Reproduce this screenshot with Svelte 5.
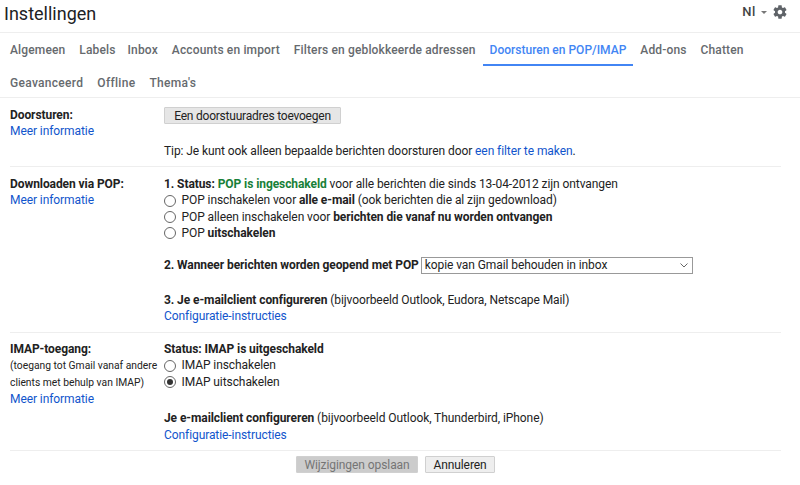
<script>
  const tabsOne = ['Algemeen', 'Labels', 'Inbox', 'Accounts en import', 'Filters en geblokkeerde adressen', 'Doorsturen en POP/IMAP', 'Add-ons', 'Chatten'];
  const tabsTwo = ['Geavanceerd', 'Offline', "Thema's"];
  const active = 'Doorsturen en POP/IMAP';
</script>

<div class="page">
  <header class="head">
    <h1>Instellingen</h1>
    <div class="tools">
      <span class="lang">Nl</span>
      <span class="caret"></span>
      <svg class="gear" viewBox="0 0 24 24" width="16" height="16"><path fill="#5f6368" d="M19.43 12.98c.04-.32.07-.64.07-.98s-.03-.66-.07-.98l2.11-1.65c.19-.15.24-.42.12-.64l-2-3.46c-.12-.22-.39-.3-.61-.22l-2.49 1c-.52-.4-1.08-.73-1.69-.98l-.38-2.65C14.46 2.18 14.25 2 14 2h-4c-.25 0-.46.18-.49.42l-.38 2.65c-.61.25-1.17.59-1.69.98l-2.49-1c-.23-.09-.49 0-.61.22l-2 3.46c-.13.22-.07.49.12.64l2.11 1.65c-.04.32-.07.65-.07.98s.03.66.07.98l-2.11 1.65c-.19.15-.24.42-.12.64l2 3.46c.12.22.39.3.61.22l2.49-1c.52.4 1.08.73 1.69.98l.38 2.65c.03.24.24.42.49.42h4c.25 0 .46-.18.49-.42l.38-2.65c.61-.25 1.17-.59 1.69-.98l2.49 1c.23.09.49 0 .61-.22l2-3.46c.12-.22.07-.49-.12-.64l-2.11-1.65zM12 15.5c-1.93 0-3.5-1.57-3.5-3.5s1.57-3.5 3.5-3.5 3.5 1.57 3.5 3.5-1.57 3.5-3.5 3.5z"/></svg>
    </div>
  </header>

  <nav class="tabs">
    <div class="tabrow one">
      {#each tabsOne as t}
        <span class="tab" class:on={t === active}>{t}</span>
      {/each}
    </div>
    <div class="tabrow two">
      {#each tabsTwo as t}
        <span class="tab">{t}</span>
      {/each}
    </div>
  </nav>

  <main class="content">
    <section class="row first">
      <div class="side">
        <div class="label">Doorsturen:</div>
        <a class="link" href="#a">Meer informatie</a>
      </div>
      <div class="body">
        <button class="btn add">Een doorstuuradres toevoegen</button>
        <div class="tip">Tip: Je kunt ook alleen bepaalde berichten doorsturen door <a class="link" href="#a">een filter te maken</a>.</div>
      </div>
    </section>

    <section class="row pop">
      <div class="side">
        <div class="label">Downloaden via POP:</div>
        <a class="link" href="#a">Meer informatie</a>
      </div>
      <div class="body">
        <div class="line"><b>1. Status: <span class="green">POP is ingeschakeld</span></b> voor alle berichten die sinds 13-04-2012 zijn ontvangen</div>
        <div class="line opt"><span class="radio"></span><span>POP inschakelen voor <b>alle e-mail</b> (ook berichten die al zijn gedownload)</span></div>
        <div class="line opt"><span class="radio"></span><span>POP alleen inschakelen voor <b>berichten die vanaf nu worden ontvangen</b></span></div>
        <div class="line opt"><span class="radio"></span><span>POP <b>uitschakelen</b></span></div>
        <div class="line when"><b>2. Wanneer berichten worden geopend met POP</b>
          <span class="select">kopie van Gmail behouden in inbox
            <svg class="chev" viewBox="0 0 8 5" width="8" height="5"><path d="M.5.5l3.5 3.5 3.5-3.5" fill="none" stroke="#666" stroke-width="1"/></svg>
          </span>
        </div>
        <div class="line conf"><b>3. Je e-mailclient configureren</b> (bijvoorbeeld Outlook, Eudora, Netscape Mail)</div>
        <a class="line link" href="#a">Configuratie-instructies</a>
      </div>
    </section>

    <section class="row imap">
      <div class="side">
        <div class="label">IMAP-toegang:</div>
        <div class="note">(toegang tot Gmail vanaf andere<br />clients met behulp van IMAP)</div>
        <a class="link" href="#a">Meer informatie</a>
      </div>
      <div class="body">
        <div class="line"><b>Status: IMAP is uitgeschakeld</b></div>
        <div class="line opt"><span class="radio"></span><span>IMAP inschakelen</span></div>
        <div class="line opt"><span class="radio sel"></span><span>IMAP uitschakelen</span></div>
        <div class="line conf2"><b>Je e-mailclient configureren</b> (bijvoorbeeld Outlook, Thunderbird, iPhone)</div>
        <a class="line link" href="#a">Configuratie-instructies</a>
      </div>
    </section>

    <div class="actions">
      <button class="btn save">Wijzigingen opslaan</button>
      <button class="btn cancel">Annuleren</button>
    </div>
  </main>
</div>

<style>
  :global(body) { margin: 0; background: #fff; }
  .page {
    width: 800px;
    height: 485px;
    overflow: hidden;
    font-family: Roboto, "Liberation Sans", sans-serif;
    font-size: 12px;
    line-height: 16.4px;
    letter-spacing: -0.08px;
    color: #222;
  }
  .head {
    height: 33px;
    box-sizing: border-box;
    border-bottom: 1px solid #eee;
    display: flex;
    align-items: flex-start;
    justify-content: space-between;
    padding: 0 12px 0 4px;
  }
  h1 {
    margin: 0;
    font-size: 18px;
    font-weight: 400;
    line-height: 28px;
    color: #202124;
    letter-spacing: 0;
  }
  .tools { display: flex; align-items: center; height: 24px; }
  .lang { font-size: 13px; font-weight: 500; color: #444; letter-spacing: 0.6px; }
  .caret {
    width: 0; height: 0; margin: 0 5px 0 5px;
    border-left: 3px solid transparent; border-right: 3px solid transparent;
    border-top: 3px solid #777;
  }
  .tabs { height: 65px; box-sizing: border-box; border-bottom: 1px solid #eee; padding-left: 3px; }
  .tabrow { height: 32px; display: flex; white-space: nowrap; }
  .tabrow.one { height: 33px; letter-spacing: 0.14px; }
  .tabrow.two { letter-spacing: 0.3px; }
  .tab {
    padding: 1px 7px 0;
    height: 33px;
    line-height: 32px;
    font-size: 12px;
    font-weight: 500;
    color: #666a6e;
    box-sizing: border-box;
  }
  .tabrow.one .tab:nth-child(2) { padding-right: 5px; }
  .tab.on { color: #4285f4; border-bottom: 2px solid #4285f4; letter-spacing: 0; }
  .content { padding: 0 19px 0 10px; }
  .row {
    display: grid;
    grid-template-columns: 154px 1fr;
    border-bottom: 1px solid #eee;
    box-sizing: border-box;
    padding-top: 9px;
  }
  .first { height: 69px; }
  .pop { height: 166px; }
  .imap { height: 118px; padding-top: 8px; }
  .label { font-weight: 700; }
  .link { color: #15c; text-decoration: none; display: block; }
  .tip .link { display: inline; }
  .note { font-size: 10.3px; line-height: 16.6px; margin-top: 0.6px; letter-spacing: 0; white-space: nowrap; }
  .btn {
    font-family: inherit;
    font-size: 12px;
    letter-spacing: inherit;
    line-height: 14px;
    height: 17px;
    padding: 0;
    margin: 0;
    border: 1px solid #d0d0d0;
    border-radius: 1px;
    background: #e6e6e6;
    color: #222;
    display: block;
    white-space: nowrap;
    box-sizing: border-box;
  }
  .tip { margin-top: 19px; }
  .add { width: 177px; letter-spacing: -0.22px; }
  .line { min-height: 16.4px; }
  .opt { display: flex; align-items: center; }
  .radio {
    width: 12px; height: 12px;
    box-sizing: border-box;
    border: 1px solid #666;
    border-radius: 50%;
    margin-right: 5.5px;
    flex: none;
    display: flex;
    align-items: center;
    justify-content: center;
  }
  .radio.sel::after { content: ""; width: 6px; height: 6px; border-radius: 50%; background: #333; }
  .green { color: #188038; }
  .when { margin-top: 15px; display: flex; align-items: center; gap: 2px; }
  .select {
    width: 272.5px;
    height: 17px;
    box-sizing: border-box;
    border: 1px solid #999;
    display: flex;
    align-items: center;
    justify-content: space-between;
    padding: 0 4px 0 3px;
  }
  .conf { margin-top: 18px; }
  .conf2 { margin-top: 20px; }
  .actions { display: flex; justify-content: center; gap: 7px; padding-top: 5px; }
  .save { width: 122px; background: #ccc; color: #757575; }
  .cancel { width: 70px; background: #eee; }
</style>
